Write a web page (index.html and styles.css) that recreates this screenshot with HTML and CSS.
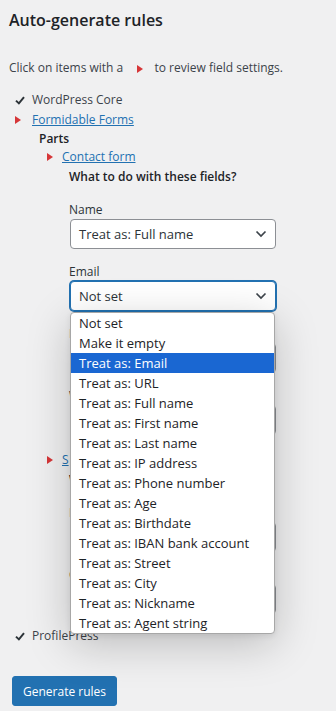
FILE: index.html
```html
<!DOCTYPE html>
<html lang="en">
<head>
<meta charset="utf-8">
<title>Auto-generate rules</title>
<link rel="stylesheet" href="styles.css">
</head>
<body>
<div class="wrap">
  <h2 class="title">Auto-generate rules</h2>
  <p class="intro">Click on items with a <span class="tri tri-inline"></span> to review field settings.</p>
  <ul class="tree">
    <li class="item">
      <div class="row">
        <span class="mark"><svg class="check" width="10" height="9" viewBox="0 0 10 9"><polyline points="1,4.6 3.9,7.4 9,1.2" fill="none" stroke="#2c3338" stroke-width="2"/></svg></span>
        <span>WordPress Core</span>
      </div>
    </li>
    <li class="item">
      <div class="row">
        <span class="mark"><span class="tri"></span></span>
        <a class="link" href="#">Formidable Forms</a>
      </div>
      <div class="parts">
        <div class="parts-title">Parts</div>
        <div class="part">
          <span class="mark mark-part"><span class="tri"></span></span>
          <a class="link" href="#">Contact form</a>
        </div>
        <div class="fields">
          <div class="fields-title">What to do with these fields?</div>
          <div class="field">
            <div class="label">Name</div>
            <div class="select">
              <span>Treat as: Full name</span>
              <svg class="chev" width="12" height="8" viewBox="0 0 12 8"><polyline points="1.5,1.5 6,6 10.5,1.5" fill="none" stroke="#3c434a" stroke-width="1.7"/></svg>
            </div>
          </div>
          <div class="field">
            <div class="label">Email</div>
            <div class="select-wrap">
              <div class="select focused">
                <span>Not set</span>
                <svg class="chev" width="12" height="8" viewBox="0 0 12 8"><polyline points="1.5,1.5 6,6 10.5,1.5" fill="none" stroke="#3c434a" stroke-width="1.7"/></svg>
              </div>
              <ul class="dropdown">
                <li class="opt">Not set</li>
                <li class="opt">Make it empty</li>
                <li class="opt selected">Treat as: Email</li>
                <li class="opt">Treat as: URL</li>
                <li class="opt">Treat as: Full name</li>
                <li class="opt">Treat as: First name</li>
                <li class="opt">Treat as: Last name</li>
                <li class="opt">Treat as: IP address</li>
                <li class="opt">Treat as: Phone number</li>
                <li class="opt">Treat as: Age</li>
                <li class="opt">Treat as: Birthdate</li>
                <li class="opt">Treat as: IBAN bank account</li>
                <li class="opt">Treat as: Street</li>
                <li class="opt">Treat as: City</li>
                <li class="opt">Treat as: Nickname</li>
                <li class="opt">Treat as: Agent string</li>
              </ul>
            </div>
          </div>
          <div class="field">
            <div class="label">M</div>
            <div class="select"></div>
          </div>
          <div class="field">
            <div class="label">W</div>
            <div class="select"></div>
          </div>
        </div>
        <div class="part part-next">
          <span class="mark mark-part"><span class="tri"></span></span>
          <a class="link" href="#">S</a>
        </div>
        <div class="fields">
          <div class="fields-title">W</div>
          <div class="field">
            <div class="label">E</div>
            <div class="select"></div>
          </div>
          <div class="field">
            <div class="label">C</div>
            <div class="select"></div>
          </div>
        </div>
      </div>
    </li>
    <li class="item item-last">
      <div class="row">
        <span class="mark"><svg class="check" width="10" height="9" viewBox="0 0 10 9"><polyline points="1,4.6 3.9,7.4 9,1.2" fill="none" stroke="#2c3338" stroke-width="2"/></svg></span>
        <span>ProfilePress</span>
      </div>
    </li>
  </ul>
  <button class="btn" type="button">Generate rules</button>
</div>
</body>
</html>
```
FILE: styles.css
```css
html, body {
  margin: 0;
  padding: 0;
}
body {
  background: #f0f0f1;
  color: #3c434a;
  font-family: "Open Sans", "Noto Sans", "Liberation Sans", sans-serif;
  font-size: 12px;
  line-height: 18px;
}
.wrap {
  padding-left: 9px;
}
.title {
  margin: 8px 0 0;
  font-size: 16px;
  line-height: 24px;
  font-weight: 600;
  color: #1d2327;
}
.intro {
  margin: 27px 0 0;
  line-height: 18px;
}
.tri {
  display: inline-block;
  width: 0;
  height: 0;
  border-left: 6px solid #d63638;
  border-top: 4px solid transparent;
  border-bottom: 4px solid transparent;
}
.tri-inline {
  margin: 0 8px 0 11px;
  vertical-align: -1px;
}
.tree {
  list-style: none;
  margin: 13px 0 0;
  padding: 0;
}
.row {
  display: flex;
  align-items: center;
  height: 20px;
}
.mark {
  width: 23px;
  display: flex;
  align-items: center;
  padding-left: 6px;
  box-sizing: border-box;
}
.link {
  color: #2271b1;
  text-decoration: underline;
}
.parts {
  padding-left: 30px;
}
.parts-title {
  font-weight: 600;
  color: #1d2327;
  line-height: 18px;
}
.part {
  display: flex;
  align-items: center;
  height: 18px;
  padding-left: 8px;
}
.mark-part {
  width: 15px;
  padding-left: 0;
}
.part-next {
  margin-top: 16px;
}
.fields {
  padding-left: 30px;
}
.fields-title {
  font-weight: 600;
  color: #1d2327;
  line-height: 20px;
  margin-top: 1px;
}
.field {
  margin-top: 13px;
}
.label {
  line-height: 19px;
  color: #2c3338;
}
.select {
  box-sizing: border-box;
  margin-left: 1px;
  width: 206px;
  height: 30px;
  border: 1px solid #8c8f94;
  border-radius: 4px;
  background: #fff;
  display: flex;
  align-items: center;
  justify-content: space-between;
  padding: 0 8px 0 8px;
  font-size: 13px;
  color: #2c3338;
}
.select.focused {
  border-color: #2271b1;
  box-shadow: 0 0 0 1px #2271b1;
}
.chev {
  display: block;
}
.select-wrap {
  position: relative;
}
.dropdown {
  position: absolute;
  top: 31px;
  left: 1px;
  width: 205px;
  box-sizing: border-box;
  margin: 0;
  padding: 0;
  list-style: none;
  background: #fff;
  border: 1px solid #a7a7a7;
  border-radius: 4px;
  box-shadow: 0 10px 44px rgba(0, 0, 0, 0.22), 0 2px 6px rgba(0, 0, 0, 0.08);
  z-index: 10;
  overflow: hidden;
}
.opt {
  height: 20px;
  line-height: 20px;
  padding-left: 8px;
  font-size: 13px;
  color: #1d2327;
  white-space: nowrap;
}
.opt.selected {
  background: #1a67d2;
  color: #fff;
}
.item-last {
  margin-top: 12px;
}
.btn {
  margin: 30px 0 0 3px;
  height: 30px;
  padding: 0 10px;
  border: 1px solid #2271b1;
  border-radius: 3px;
  background: #2271b1;
  color: #fff;
  font-family: "Open Sans", "Noto Sans", "Liberation Sans", sans-serif;
  font-size: 12px;
}
```
